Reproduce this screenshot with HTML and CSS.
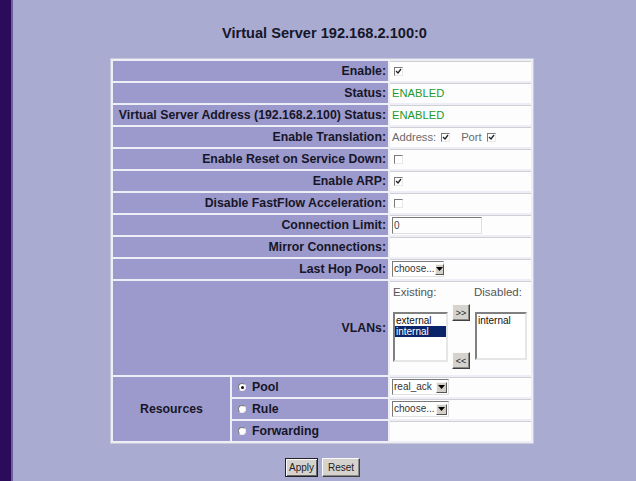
FILE: index.html
```html
<!DOCTYPE html>
<html>
<head>
<meta charset="utf-8">
<link rel="stylesheet" href="styles.css">
</head>
<body>
<div class="page">
  <div class="sidebar"></div>
  <div class="main">
    <h1 class="title">Virtual Server 192.168.2.100:0</h1>
    <table class="vs">
      <colgroup><col class="c1"><col class="c2"><col class="c3"></colgroup>
      <tr><td class="lbl" colspan="2">Enable:</td><td class="val"><span class="cb checked"><svg viewBox="0 0 7 7" width="7" height="7"><path d="M1 3 L3 5 L6 1" fill="none" stroke="#222" stroke-width="1.3"/></svg></span></td></tr>
      <tr><td class="lbl" colspan="2">Status:</td><td class="val green">ENABLED</td></tr>
      <tr><td class="lbl" colspan="2">Virtual Server Address (192.168.2.100) Status:</td><td class="val green">ENABLED</td></tr>
      <tr><td class="lbl" colspan="2">Enable Translation:</td><td class="val"><span class="grey">Address:</span><span class="cb checked sp1"><svg viewBox="0 0 7 7" width="7" height="7"><path d="M1 3 L3 5 L6 1" fill="none" stroke="#222" stroke-width="1.3"/></svg></span><span class="grey sp2">Port</span><span class="cb checked sp3"><svg viewBox="0 0 7 7" width="7" height="7"><path d="M1 3 L3 5 L6 1" fill="none" stroke="#222" stroke-width="1.3"/></svg></span></td></tr>
      <tr><td class="lbl" colspan="2">Enable Reset on Service Down:</td><td class="val"><span class="cb"></span></td></tr>
      <tr><td class="lbl" colspan="2">Enable ARP:</td><td class="val"><span class="cb checked"><svg viewBox="0 0 7 7" width="7" height="7"><path d="M1 3 L3 5 L6 1" fill="none" stroke="#222" stroke-width="1.3"/></svg></span></td></tr>
      <tr><td class="lbl" colspan="2">Disable FastFlow Acceleration:</td><td class="val"><span class="cb"></span></td></tr>
      <tr><td class="lbl" colspan="2">Connection Limit:</td><td class="val"><span class="textin">0</span></td></tr>
      <tr><td class="lbl" colspan="2">Mirror Connections:</td><td class="val"></td></tr>
      <tr><td class="lbl" colspan="2">Last Hop Pool:</td><td class="val"><span class="sel w52"><span class="seltext">choose...</span><span class="arrow"><svg viewBox="0 0 7 4" width="7" height="4"><path d="M0 0 H7 L3.5 4 Z" fill="#000"/></svg></span></span></td></tr>
      <tr class="vlanrow"><td class="lbl" colspan="2">VLANs:</td><td class="val vlancell">
        <div class="vlans">
          <div class="vcol">
            <div class="vhead">Existing:</div>
            <div class="list lleft"><div class="item">external</div><div class="item selected">internal</div></div>
          </div>
          <div class="vmid">
            <span class="btn small b1">&gt;&gt;</span>
            <span class="btn small b2">&lt;&lt;</span>
          </div>
          <div class="vcol">
            <div class="vhead">Disabled:</div>
            <div class="list lright"><div class="item">internal</div></div>
          </div>
        </div>
      </td></tr>
      <tr><td class="lbl res" rowspan="3">Resources</td><td class="lbl opt"><span class="radio on"></span>Pool</td><td class="val"><span class="sel w58"><span class="seltext">real_ack</span><span class="arrow"><svg viewBox="0 0 7 4" width="7" height="4"><path d="M0 0 H7 L3.5 4 Z" fill="#000"/></svg></span></span></td></tr>
      <tr><td class="lbl opt"><span class="radio"></span>Rule</td><td class="val"><span class="sel w58"><span class="seltext">choose...</span><span class="arrow"><svg viewBox="0 0 7 4" width="7" height="4"><path d="M0 0 H7 L3.5 4 Z" fill="#000"/></svg></span></span></td></tr>
      <tr><td class="lbl opt"><span class="radio"></span>Forwarding</td><td class="val"></td></tr>
    </table>
    <div class="actions">
      <span class="btn apply">Apply</span>
      <span class="btn reset">Reset</span>
    </div>
  </div>
</div>
</body>
</html>
```

FILE: styles.css
```css
html, body {
  margin: 0;
  padding: 0;
  height: 100%;
}
body {
  font-family: "Liberation Sans", Arial, sans-serif;
  background: #a9abd0;
}
.page {
  display: flex;
  height: 481px;
  overflow: hidden;
}
.sidebar {
  width: 11px;
  background: #2c0c5a;
  border-right: 2px solid #6a5f9a;
  flex: none;
}
.main {
  flex: 1;
  background: #a9abd0;
  display: flex;
  flex-direction: column;
  align-items: center;
}
.title {
  margin: 25px 0 0 0;
  font-size: 14.6px;
  line-height: 16px;
  font-weight: bold;
  color: #16162a;
}
.vs {
  margin-top: 18px;
  margin-right: 5px;
  border-collapse: separate;
  border-spacing: 2px;
  background: #eeeef6;
  width: 422px;
  table-layout: fixed;
  box-shadow: 0 0 0 1px #c9c9dc;
}
.c1 { width: 117px; }
.c2 { width: 156px; }
.c3 { width: 141px; }
.vs td {
  height: 20px;
  padding: 0;
  font-size: 12.3px;
  line-height: 14px;
  overflow: hidden;
}
.lbl {
  background: #9c99cc;
  text-align: right;
  font-weight: bold;
  color: #161628;
  padding-right: 2px !important;
  white-space: nowrap;
}
.lbl.res {
  text-align: center;
  padding-right: 0 !important;
}
.lbl.opt {
  text-align: left;
  padding-left: 6px !important;
}
.val {
  background: #fdfdfd;
  box-shadow: inset 0 1px 0 #cfcfd6;
  padding-left: 2px !important;
  vertical-align: middle;
  white-space: nowrap;
  font-size: 11.2px !important;
}
.green {
  color: #1f9a2a;
}
.grey {
  color: #6a6a70;
}
.cb {
  display: inline-flex;
  align-items: center;
  justify-content: center;
  width: 7px;
  height: 7px;
  border: 1px solid;
  border-color: #7a7a7a #e8e8e8 #e8e8e8 #7a7a7a;
  background: #fff;
  vertical-align: middle;
  margin-left: 2px;
  position: relative;
  top: -1px;
}
.cb svg {
  display: block;
}
.sp1 { margin-left: 5px; }
.sp2 { margin-left: 11px; }
.sp3 { margin-left: 5px; }
.textin {
  display: inline-block;
  box-sizing: border-box;
  width: 90px;
  height: 17px;
  border: 1px solid;
  border-color: #7a7a7a #e0e0e0 #e0e0e0 #7a7a7a;
  font-size: 10px;
  line-height: 15px;
  padding-left: 1px;
  color: #444;
  vertical-align: middle;
}
.sel {
  display: inline-flex;
  align-items: center;
  justify-content: space-between;
  box-sizing: border-box;
  height: 16px;
  border: 1px solid;
  border-color: #7a7a7a #e0e0e0 #e0e0e0 #7a7a7a;
  background: #fff;
  vertical-align: middle;
  padding-left: 1px;
  padding-right: 1px;
}
.w52 { width: 52px; }
.w58 { width: 57px; }
.seltext {
  font-size: 10px;
  color: #333;
  line-height: 12px;
}
.arrow {
  display: inline-flex;
  align-items: center;
  justify-content: center;
  width: 11px;
  height: 11px;
  background: #d4d0c8;
  border: 1px solid;
  border-color: #f4f4f4 #555 #555 #f4f4f4;
  box-sizing: border-box;
}
.vlanrow td {
  height: 94px;
}
.vlancell {
  vertical-align: top !important;
  padding-left: 3px !important;
}
.vlans {
  display: flex;
  gap: 4px;
  padding-top: 5px;
}
.vcol {
  display: flex;
  flex-direction: column;
}
.vhead {
  color: #555;
  font-size: 11.5px;
  line-height: 13px;
  height: 13px;
}
.list {
  margin-top: 13px;
  box-sizing: border-box;
  border: 2px solid;
  border-color: #808080 #e6e6e6 #e6e6e6 #808080;
  background: #fff;
  font-size: 10px;
  line-height: 11px;
  color: #111;
  padding: 1px 0 0 0;
}
.lleft {
  width: 55px;
  height: 50px;
}
.lright {
  width: 52px;
  height: 48px;
  margin-left: 1px;
}
.item {
  padding-left: 1px;
}
.item.selected {
  background: #0a246a;
  color: #fff;
}
.vmid {
  display: flex;
  flex-direction: column;
  width: 18px;
  padding-top: 18px;
}
.btn {
  display: inline-flex;
  align-items: center;
  justify-content: center;
  box-sizing: border-box;
  background: #d6d3ce;
  border: 1px solid;
  border-color: #fafafa #404040 #404040 #fafafa;
  box-shadow: inset -1px -1px 0 #888;
  color: #222;
  font-size: 10px;
}
.btn.small {
  width: 18px;
  height: 17px;
  font-size: 9px;
}
.b2 {
  margin-top: 31px;
}
.actions {
  display: flex;
  gap: 4px;
  margin-top: 15px;
  margin-left: -4px;
}
.btn.apply {
  width: 33px;
  height: 19px;
  border-color: #222;
  box-shadow: inset 1px 1px 0 #fafafa, inset -1px -1px 0 #666;
}
.btn.reset {
  width: 38px;
  height: 19px;
}
.radio {
  display: inline-block;
  width: 8px;
  height: 8px;
  border-radius: 50%;
  background: #fff;
  border: 1px solid;
  border-color: #7a7a7a #f0f0f0 #f0f0f0 #7a7a7a;
  margin-right: 6px;
  vertical-align: middle;
  position: relative;
  top: -1px;
  box-sizing: border-box;
}
.radio.on::after {
  content: "";
  position: absolute;
  left: 2px;
  top: 2px;
  width: 3px;
  height: 3px;
  border-radius: 50%;
  background: #111;
}
```
